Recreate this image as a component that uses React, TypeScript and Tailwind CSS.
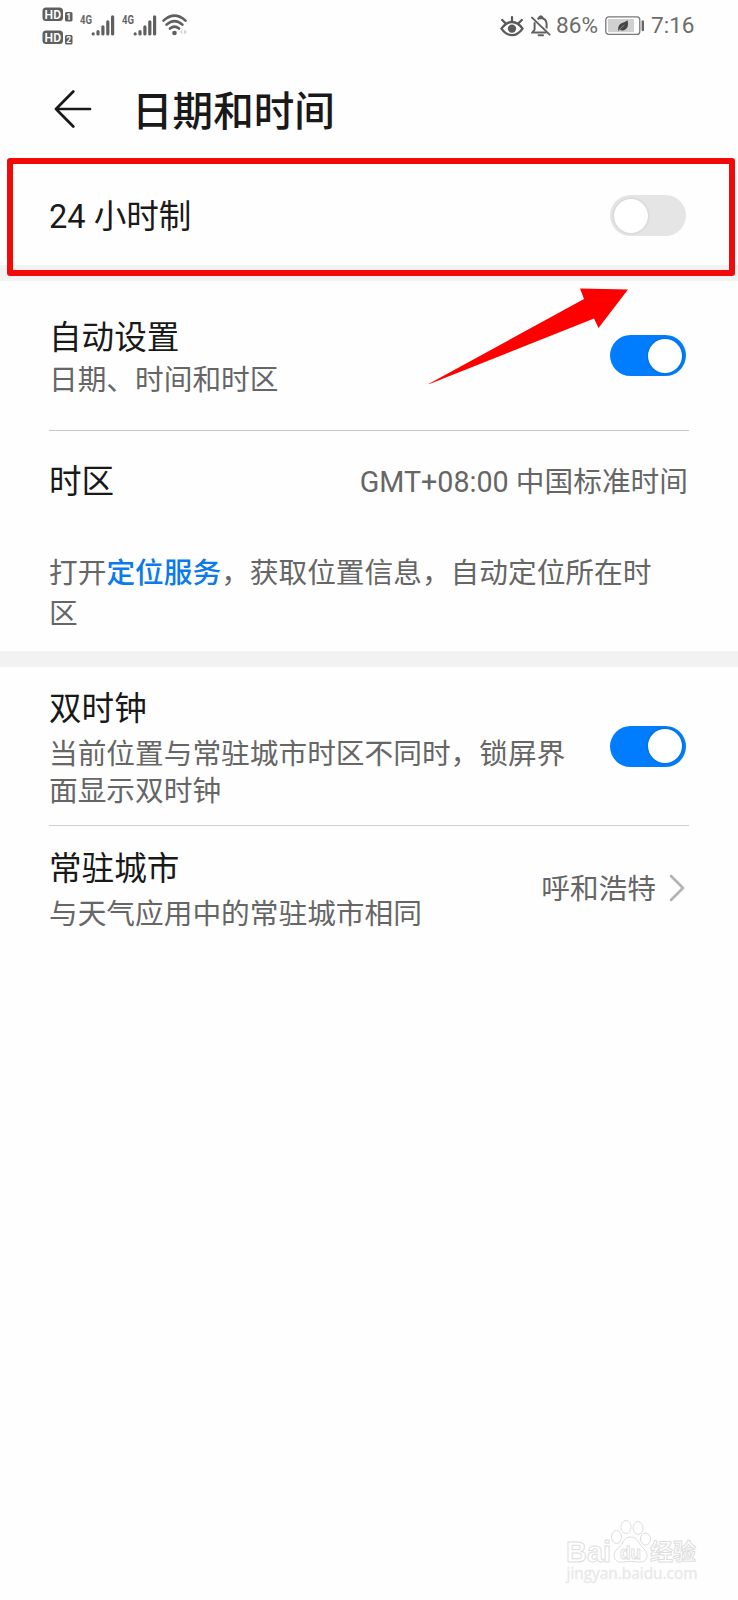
import type { ReactNode } from 'react';

function HdBadge({ slot }: { slot: string }) {
  return (
    <svg width="31" height="15" viewBox="0 0 31 15" className="block">
      <rect x="0.5" y="0.5" width="20.5" height="13.5" rx="3.5" fill="#5f5f5f" />
      <text x="10.8" y="11.9" textAnchor="middle" fontSize="13" fontWeight="600" fill="#fff" textLength="16.5" lengthAdjust="spacingAndGlyphs">HD</text>
      <rect x="23" y="5" width="7.5" height="9.5" rx="1.5" fill="#5f5f5f" />
      <text x="26.7" y="12.8" textAnchor="middle" fontSize="8.5" fontWeight="700" fill="#fff">{slot}</text>
    </svg>
  );
}

function Signal() {
  return (
    <svg width="36" height="24" viewBox="0 0 36 24" className="block">
      <text x="0" y="10.8" fontSize="12.5" fontWeight="700" fill="#666" textLength="12" lengthAdjust="spacingAndGlyphs">4G</text>
      <g stroke="#5f5f5f" strokeWidth="3.2" strokeLinecap="round">
        <path d="M13.2 20.9v.1M18 18.6v2.4M22.9 13.8v7.2M27.8 8.8v12.2M32.6 3.8v17.2" />
      </g>
    </svg>
  );
}

function Wifi() {
  return (
    <svg width="26" height="22" viewBox="0 0 26 22" className="block" fill="none" stroke="#5f5f5f" strokeWidth="2.6" strokeLinecap="round">
      <path d="M1.5 6.6Q12.5-3.2 23.5 6.6M4.6 10.6Q12.5 3.6 20.4 10.6M8 14.6Q12.5 10.8 17 14.6" />
      <circle cx="12.5" cy="19" r="2.3" fill="#5f5f5f" stroke="none" />
      <path d="M20.3 15.5v5l-2.3-2.5zM22.2 15.5v5l2.8-2.5z" fill="#d2d2d2" stroke="none" />
    </svg>
  );
}

function Eye() {
  return (
    <svg width="24" height="21" viewBox="0 0 24 21" className="block" fill="none" stroke="#5a5a5a" strokeWidth="2.3" strokeLinecap="round">
      <path d="M1.4 12.6Q6.2 6 12 6t10.6 6.6Q17.8 19.2 12 19.2T1.4 12.6z" strokeLinejoin="round" />
      <circle cx="12" cy="12.6" r="4.2" fill="#5a5a5a" stroke="none" />
      <path d="M12 5.5V1.2M5.6 7.4L2.2 4M18.4 7.4L21.8 4" />
    </svg>
  );
}

function BellOff() {
  return (
    <svg width="20" height="22" viewBox="0 0 20 22" className="block" fill="none" stroke="#606060" strokeWidth="2">
      <path d="M3.6 7.3v7.2L1.3 17.6H15.4M6.6 4.2Q8 3 9.8 3Q15.4 3.4 15.6 9v4.6M7.4 3.4Q9.8-1 12.2 3.4" />
      <path d="M7.6 20.2h4.4" strokeLinecap="round" />
      <path d="M1 2.6L18.6 19.6" strokeLinecap="round" />
    </svg>
  );
}

function Battery() {
  return (
    <svg width="40" height="20" viewBox="0 0 40 20" className="block">
      <rect x="0.8" y="0.8" width="34" height="17.6" rx="3" fill="#fff" stroke="#777" strokeWidth="1.3" />
      <rect x="3" y="3" width="26" height="13.2" fill="#d0d0d0" />
      <path d="M13.2 15.2Q12.4 9 16.4 7.2Q20 6.4 22.6 4.2Q24.4 12 19 14.2Q16.6 15 14.8 13.8z" fill="#444" />
      <path d="M14 14.4Q16 11.5 19.4 9" stroke="#aaa" strokeWidth="0.7" fill="none" />
      <path d="M37.8 5.4v8.6" stroke="#666" strokeWidth="2.4" strokeLinecap="round" />
    </svg>
  );
}

function Switch({ on = false }: { on?: boolean }) {
  return (
    <button
      role="switch"
      aria-checked={on}
      className={`mr-[3px] flex h-[41px] w-[76px] shrink-0 items-center rounded-full px-[4px] ${on ? 'justify-end bg-[#007dff]' : 'justify-start bg-[#e5e5e5]'}`}
    >
      <span className={`size-[34px] rounded-full bg-white ${on ? 'shadow-[0_0_3px_rgba(0,0,0,0.25)]' : 'shadow-[0_0_3px_rgba(0,0,0,0.16)]'}`} />
    </button>
  );
}

function Label({ children }: { children: ReactNode }) {
  return <div className="text-[32.6px] leading-[42px] text-[#191919]">{children}</div>;
}

function Watermark() {
  return (
    <svg width="136" height="68" viewBox="0 0 136 68" className="block" fill="#fff" stroke="#dedede" strokeWidth="1">
      <text x="1" y="44" fontFamily="Liberation Sans" fontWeight="700" fontSize="30" textLength="45" lengthAdjust="spacingAndGlyphs">Bai</text>
      <ellipse cx="51.5" cy="19" rx="5" ry="6.5" />
      <ellipse cx="61" cy="9" rx="5" ry="6.5" />
      <ellipse cx="73" cy="10" rx="5" ry="6.5" />
      <ellipse cx="80.5" cy="21" rx="5" ry="6" />
      <path d="M65.5 19C73 19 74 27 79 31C85 37 82 44 75 44Q66 42.5 58 44C48 45 47 36 52 31C58 27 58 19 65.5 19z" />
      <text x="55" y="41" fontFamily="Liberation Sans" fontWeight="700" fontSize="19" textLength="21" lengthAdjust="spacingAndGlyphs">du</text>
      <text x="85" y="42" fontFamily="Noto Sans CJK SC" fontWeight="700" fontSize="23">经验</text>
      <text x="1.5" y="60.5" fontFamily="Open Sans" fontWeight="400" fontSize="16" fill="#e6e6e6" stroke="#ececec" strokeWidth="0.4" textLength="131" lengthAdjust="spacingAndGlyphs">jingyan.baidu.com</text>
    </svg>
  );
}

export default function App() {
  return (
    <div className="relative flex h-[1600px] w-[738px] flex-col overflow-hidden bg-[#fefefe] font-['Roboto','Noto_Sans_CJK_SC',sans-serif] text-[28.7px] text-[#666]">
      <header className="flex h-[60px] shrink-0 items-start justify-between px-[42px]">
        <div className="flex items-start">
          <div className="flex flex-col gap-[8px] pt-[7px]">
            <HdBadge slot="1" />
            <HdBadge slot="2" />
          </div>
          <div className="ml-[7px] flex gap-[6px] pt-[13px]">
            <Signal />
            <Signal />
          </div>
          <div className="ml-[4px] pt-[14px]"><Wifi /></div>
        </div>
        <div className="flex h-[52px] items-center text-[22.6px] leading-[26px] text-[#6c6c6c]">
          <Eye />
          <div className="ml-[7px] mr-[5px]"><BellOff /></div>
          <span className="w-[44px] whitespace-nowrap">86%</span>
          <div className="mx-[5px]"><Battery /></div>
          <span className="w-[46px] whitespace-nowrap pl-px">7:16</span>
        </div>
      </header>

      <div className="flex h-[100px] shrink-0 items-center pl-[54px]">
        <svg width="38" height="38" viewBox="0 0 38 38" className="mb-[2px]" fill="none" stroke="#191919" strokeWidth="2.7" strokeLinecap="round" strokeLinejoin="round">
          <path d="M19.3 1.5L2 19L19.3 36.5M2 19H36" />
        </svg>
        <h1 className="ml-[40px] pt-[3px] text-[40.6px] font-medium leading-[50px] text-[#191919]">日期和时间</h1>
      </div>

      <section className="flex h-[105px] shrink-0 items-center justify-between px-[49px] pt-[6px]">
        <div className="pt-[3px]"><Label>24 小时制</Label></div>
        <Switch />
      </section>

      <div className="h-[16px] shrink-0 bg-[#f2f2f2]" />

      <section className="mx-[49px] flex h-[150px] shrink-0 items-center justify-between border-b border-[#c8c8c8]">
        <div className="pt-[7px]">
          <Label>自动设置</Label>
          <p className="mt-px leading-[41px]">日期、时间和时区</p>
        </div>
        <Switch on />
      </section>

      <section className="mx-[49px] flex h-[101px] shrink-0 items-center justify-between">
        <div className="pt-px"><Label>时区</Label></div>
        <span className="pr-px pt-[2px]">GMT+08:00 中国标准时间</span>
      </section>

      <p className="h-[119px] shrink-0 pl-[49px] pr-[70px] pt-[21px] leading-[41px]">
        打开<a className="font-medium text-[#0a7aec]">定位服务</a>，获取位置信息，自动定位所在时区
      </p>

      <div className="h-[16px] shrink-0 bg-[#f2f2f2]" />

      <section className="mx-[49px] flex h-[159px] shrink-0 items-center justify-between border-b border-[#d0d0d0]">
        <div className="w-[520px] pt-[6px]">
          <Label>双时钟</Label>
          <p className="mt-[6px] leading-[37.5px]">当前位置与常驻城市时区不同时，锁屏界面显示双时钟</p>
        </div>
        <Switch on />
      </section>

      <section className="mx-[49px] flex h-[126px] shrink-0 items-center justify-between">
        <div className="pt-[3px]">
          <Label>常驻城市</Label>
          <p className="mt-[4px] leading-[40px]">与天气应用中的常驻城市相同</p>
        </div>
        <div className="flex items-center gap-[13px] pr-[4px]">
          <span className="pt-[2px]">呼和浩特</span>
          <svg width="16" height="28" viewBox="0 0 16 28" className="-mt-px" fill="none" stroke="#b2b2b2" strokeWidth="2.6" strokeLinecap="round" strokeLinejoin="round">
            <path d="M2 2L14 14L2 26" />
          </svg>
        </div>
      </section>

      <div className="pointer-events-none absolute left-[7px] top-[158px] h-[118px] w-[728px] rounded-[3px] border-[6px] border-[#f20a0a]" />
      <svg className="pointer-events-none absolute left-[428px] top-[286px]" width="202" height="100" viewBox="0 0 202 100">
        <path d="M0.5 98L156 13L152 2.5L200 3.5L170.5 42L166 32.5L1.5 98z" fill="#ff0000" />
      </svg>
      <div className="absolute left-[565px] top-[1518px]"><Watermark /></div>
    </div>
  );
}
